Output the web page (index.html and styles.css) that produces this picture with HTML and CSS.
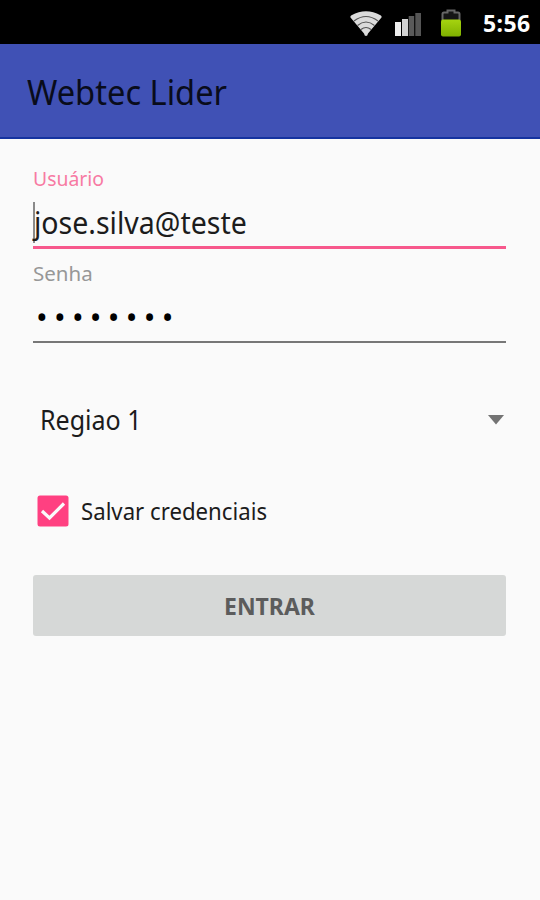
FILE: index.html
```html
<!DOCTYPE html>
<html lang="pt-BR">
<head>
  <meta charset="UTF-8">
  <title>Webtec Lider</title>
  <link rel="stylesheet" href="styles.css">
</head>
<body>

<div class="status-bar">
  <svg class="wifi" width="34" height="28" viewBox="0 0 34 28">
    <path d="M17 27 Q15.5 27 15 24.5 L1.5 8.5 Q1 7 2.5 6.2 Q17 -1.5 31.5 6.2 Q33 7 32.5 8.5 L19 24.5 Q18.5 27 17 27 Z" fill="#dcdcdc"/>
    <g fill="none" stroke="#555" stroke-width="1.2">
      <path d="M5 12 Q17 3 29 12"/>
      <path d="M8.5 16.5 Q17 9.5 25.5 16.5"/>
      <path d="M12 20.5 Q17 16.5 22 20.5"/>
    </g>
  </svg>
  <svg class="signal" width="28" height="28" viewBox="0 0 28 28">
    <rect x="1" y="13" width="6" height="14" fill="#eee"/>
    <rect x="8" y="10" width="6" height="17" fill="#d2d2d2"/>
    <rect x="14.7" y="7" width="5.5" height="20" fill="#5a5a5a"/>
    <rect x="21.3" y="4" width="5.7" height="23" fill="#555"/>
  </svg>
  <svg class="battery" width="22" height="28" viewBox="0 0 22 28">
    <defs>
      <linearGradient id="charge" x1="0" y1="0" x2="0" y2="1">
        <stop offset="0" stop-color="#a6d410"/>
        <stop offset="1" stop-color="#7fb000"/>
      </linearGradient>
    </defs>
    <path d="M2.5 11 V5 Q2.5 3.5 4 3.5 H7.5 V1.5 H14.5 V3.5 H18 Q19.5 3.5 19.5 5 V11" fill="#151515" stroke="#666" stroke-width="2"/>
    <rect x="1" y="10.5" width="20" height="17" rx="2" fill="url(#charge)"/>
  </svg>
  <span class="clock">5:56</span>
</div>

<header class="app-bar">
  <h1>Webtec Lider</h1>
</header>

<form class="login">
  <div class="field active">
    <label>Usuário</label>
    <div class="value"><span class="caret"></span><span class="user">jose.silva@teste</span></div>
  </div>

  <div class="field">
    <label>Senha</label>
    <div class="value"><span class="password">••••••••</span></div>
  </div>

  <div class="spinner">
    <span class="region">Regiao 1</span>
    <svg width="16" height="10" viewBox="0 0 16 10"><path d="M0 0 H16 L8 9.5 Z" fill="#737373"/></svg>
  </div>

  <div class="check">
    <svg width="32" height="32" viewBox="0 0 32 32">
      <rect x="0.5" y="0.5" width="31" height="31" rx="2.5" fill="#ff4081"/>
      <path d="M5 16 L12.5 23 L27 8.5" fill="none" stroke="#fafafa" stroke-width="3.2"/>
    </svg>
    <span class="save">Salvar credenciais</span>
  </div>

  <button type="button">ENTRAR</button>
</form>

</body>
</html>
```
FILE: styles.css
```css
* {
  box-sizing: border-box;
}
body {
  font-family: "Noto Sans", "Open Sans", sans-serif;
  background: #fafafa;
  color: #1c1c1c;
  margin: 0;
  height: 900px;
  overflow: hidden;
}
.status-bar {
  display: flex;
  align-items: center;
  justify-content: flex-end;
  height: 44px;
  padding-top: 2px;
  padding-right: 10px;
  background: #000;
}
.signal {
  margin-left: 11px;
}
.battery {
  margin-left: 18px;
}
.clock {
  margin-left: 21px;
  width: 47px;
  color: #fff;
  font-size: 23px;
  font-weight: bold;
  line-height: 40px;
  white-space: nowrap;
  letter-spacing: 0.4px;
}
.app-bar {
  height: 95px;
  padding-left: 27px;
  background: #4051b5;
  border-bottom: 2px solid #1533a0;
}
h1 {
  margin: 0;
  color: #090c1b;
  font-size: 34px;
  font-weight: normal;
  line-height: 96px;
  transform: scaleX(0.96);
  transform-origin: left;
}
.login {
  display: flex;
  flex-direction: column;
  padding: 25px 34px 0 33px;
}
.field {
  height: 95px;
}
.field label {
  display: block;
  color: #979797;
  font-size: 20.5px;
  line-height: 28px;
}
.field .value {
  display: flex;
  align-items: center;
  height: 52px;
  margin-top: 4px;
  padding-top: 1px;
  border-bottom: 2px solid #777;
  font-size: 30px;
}
.field.active label {
  color: #f77aa3;
  transform: scaleX(0.945);
  transform-origin: left;
}
.field.active .value {
  height: 57px;
  margin-top: 0;
  padding-top: 7px;
  border-bottom: 3px solid #f7588c;
}
.caret {
  width: 2px;
  height: 41px;
  margin-right: -1px;
  background: #8a8a8a;
}
.user {
  transform: scaleX(0.95);
  transform-origin: left;
}
.password {
  margin-left: 3px;
  color: #000;
  font-size: 31px;
  letter-spacing: 6.3px;
}
.spinner {
  display: flex;
  align-items: center;
  justify-content: space-between;
  height: 60px;
  margin-top: 36px;
  padding: 0 2px 0 7px;
  font-size: 26.5px;
}
.region {
  transform: scaleX(0.945);
  transform-origin: left;
}
.check {
  display: flex;
  align-items: center;
  gap: 12px;
  height: 60px;
  margin-top: 31px;
  padding-left: 4px;
  font-size: 24px;
}
.save {
  margin-top: -2px;
  transform: scaleX(0.925);
  transform-origin: left;
}
button {
  height: 61px;
  margin-top: 34px;
  border: none;
  border-radius: 3px;
  background: #d6d8d7;
  color: #5c5c5c;
  font-family: inherit;
  font-size: 23px;
  font-weight: bold;
}
```
